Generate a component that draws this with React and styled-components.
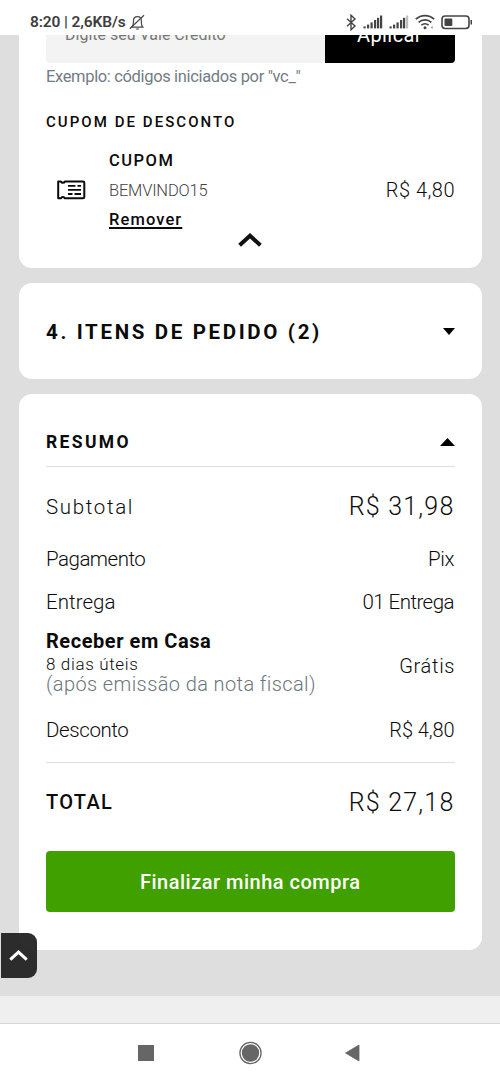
import React from "react";
import styled, { createGlobalStyle } from "styled-components";

const Global = createGlobalStyle`
  * { box-sizing: border-box; }
  body { margin: 0; background: #fff; font-family: Roboto, "Liberation Sans", sans-serif; color: #0b0b0b; }
  svg { display: block; flex: none; }
`;

const Screen = styled.div`
  width: 500px;
  height: 1083px;
  display: flex;
  flex-direction: column;
  overflow: hidden;
  background: #fff;
`;

const StatusBar = styled.header`
  height: 35px;
  flex: none;
  display: flex;
  align-items: flex-end;
  justify-content: space-between;
  padding: 0 27px 3px 30px;
  color: #3d3d3d;
`;

const StatusGroup = styled.div`
  display: flex;
  align-items: center;
  height: 20px;
  gap: ${(p) => p.$gap}px;
`;

const Page = styled.main`
  height: 961px;
  flex: none;
  overflow: hidden;
  background: #dedede;
  padding: 0 18.5px 0 19px;
  display: flex;
  flex-direction: column;
  gap: 15px;
`;

const Card = styled.section`
  flex: none;
  height: ${(p) => p.$height}px;
  background: #fff;
  border-radius: ${(p) => (p.$open ? "0 0 13px 13px" : "13px")};
  padding: 0 27px;
  display: flex;
  flex-direction: column;
`;

const Text = styled.span`
  font-size: ${(p) => p.$size || 20}px;
  font-weight: ${(p) => p.$weight || 350};
  letter-spacing: ${(p) => p.$track || 0}px;
  margin-right: ${(p) => -(p.$track || 0)}px;
  line-height: ${(p) => p.$line || 20}px;
  color: ${(p) => p.$color || "inherit"};
  white-space: nowrap;
`;

const Amount = styled.span`
  font-size: 25px;
  font-weight: 350;
  letter-spacing: 1.2px;
  line-height: 30px;
  padding-top: 1px;
  white-space: nowrap;
`;

const VoucherField = styled.div`
  display: flex;
  flex: none;
  height: 58px;
  margin-top: -30px;
  border-radius: 4px;
  overflow: hidden;
`;

const VoucherInput = styled.div`
  flex: 1;
  display: flex;
  align-items: center;
  padding: 1px 0 0 19px;
  background: #f3f3f3;
`;

const ApplyButton = styled.button`
  width: 130px;
  border: 0;
  padding: 1px 0 0;
  background: #000;
  color: #fff;
  font: 400 20px/20px Roboto, sans-serif;
  letter-spacing: 0.4px;
`;

const Hint = styled.div`
  display: flex;
  margin-top: 4px;
`;

const SectionLabel = styled.h3`
  margin: 25px 0 0;
  display: flex;
`;

const Coupon = styled.div`
  display: flex;
  align-items: center;
  height: 90px;
  margin-top: 13px;
  padding-left: 11px;
`;

const CouponInfo = styled.div`
  flex: 1;
  display: flex;
  flex-direction: column;
  align-items: flex-start;
  gap: 9.5px;
  padding: 1px 0 0 23px;
`;

const RemoveLink = styled.a`
  font-size: 16.5px;
  font-weight: 500;
  letter-spacing: 1.1px;
  line-height: 20px;
  text-decoration: underline;
  text-decoration-thickness: 1.5px;
  text-underline-offset: 2px;
`;

const CollapseToggle = styled.div`
  display: flex;
  justify-content: center;
  margin-top: -2px;
`;

const Header = styled.div`
  display: flex;
  flex: none;
  align-items: center;
  justify-content: space-between;
  height: ${(p) => p.$height}px;
  padding-top: ${(p) => p.$top || 0}px;
`;

const Divider = styled.hr`
  flex: none;
  width: 100%;
  height: 1px;
  border: 0;
  margin: 0;
  background: #dfdfdf;
`;

const Row = styled.div`
  display: flex;
  flex: none;
  align-items: center;
  justify-content: space-between;
  height: ${(p) => p.$height}px;
`;

const Delivery = styled.div`
  display: flex;
  flex-direction: column;
  padding-bottom: 8px;
`;

const BuyButton = styled.button`
  flex: none;
  height: 61px;
  margin-top: 9px;
  border: 0;
  border-radius: 4px;
  padding: 2px 0 0;
  background: #40a000;
  color: #fff;
  font: 500 20px/20px Roboto, sans-serif;
  letter-spacing: 0.5px;
`;

const FooterStrip = styled.div`
  flex: none;
  height: 28px;
  background: #efefef;
  border-bottom: 1px solid #d6d6d6;
`;

const NavBar = styled.nav`
  flex: 1;
  display: flex;
  align-items: center;
  padding: 0 140px 2px 138px;
  justify-content: space-between;
`;

const ScrollTop = styled.button`
  position: fixed;
  left: 1px;
  top: 933px;
  width: 35.5px;
  height: 44.5px;
  border: 0;
  padding: 0;
  border-radius: 0 9px 9px 0;
  background: rgba(34, 34, 34, 0.95);
  display: flex;
  align-items: center;
  justify-content: center;
`;

const BellOff = () => (
  <svg width="16" height="17" viewBox="0 0 16 17" fill="none" stroke="#4a4a4a" strokeWidth="1.2">
    <path d="M2.6 13.2h11.2c-1-1-1.400-2-1.400-4.200V7.200c0-2.600-1.500-4.500-4-4.500s-4 1.900-4 4.500V9c0 2.200-.7 3.200-1.800 4.200z" />
    <path d="M6.800 15h3.200M.8 14.800L15 1.200" />
  </svg>
);

const Bluetooth = () => (
  <svg width="12" height="17" viewBox="0 0 12 17" fill="none" stroke="#444" strokeWidth="1.4">
    <path d="M2 4.800l8 7.300-4 3.700V1.200l4 3.700-8 7.300" />
  </svg>
);

const Signal = ({ weak }) => (
  <svg width="20" height="14" viewBox="0 0 20 14" fill="#444">
    <rect x="0.500" y="11.400" width="2.200" height="2" />
    <rect x="4" y="9.600" width="2.200" height="3.800" />
    <rect x="7.500" y="7.400" width="2.200" height="6" />
    <rect x="11" y="5" width="2.200" height="8.400" />
    <rect x="14" y="2.800" width="2.200" height="10.600" />
    <rect x="17" y="0.500" width="2.200" height="12.900" opacity={weak ? 0.35 : 1} />
  </svg>
);

const Wifi = () => (
  <svg width="20" height="16" viewBox="0 0 20 16" fill="none" stroke="#444" strokeWidth="1.700">
    <path d="M.8 5.200a13.500 13.500 0 0 1 18.400 0M3.600 8.300a9.400 9.400 0 0 1 12.800 0M6.400 11.200a5.300 5.300 0 0 1 7.200 0" />
    <circle cx="10" cy="13.700" r="1.500" fill="#444" stroke="none" />
    <path d="M16 13.200l1.500-1.400v3.200z" fill="#777" stroke="none" />
  </svg>
);

const Battery = () => (
  <svg width="32" height="15" viewBox="0 0 32 15">
    <rect x="1" y="1" width="27" height="12.500" rx="3.200" fill="none" stroke="#444" strokeWidth="1.600" />
    <rect x="3.500" y="3.400" width="7.800" height="7.700" rx="1" fill="#444" />
    <path d="M29.500 5h1.500v4.500h-1.500z" fill="#444" />
  </svg>
);

const Ticket = () => (
  <svg width="29" height="20" viewBox="0 0 29 20" fill="none" stroke="#0b0b0b" strokeWidth="2" strokeLinejoin="round">
    <path d="M1.200 1.500h2.700a2.200 2.200 0 0 0 4 0H26q1.300 0 1.300 1.300V17q0 1.300-1.300 1.300H7.900a2.200 2.200 0 0 0-4 0H1.200z" />
    <path d="M11 5.800h7.500M20.500 5.800h3.500M11 9.900h13M11 14h4.500M17.500 14h6.500" strokeWidth="1.800" />
  </svg>
);

const Chevron = ({ width, height, color, stroke }) => (
  <svg width={width} height={height} viewBox="0 0 24 14" fill="none" stroke={color} strokeWidth={stroke}>
    <path d="M1.600 12.300L12 2.700l10.400 9.600" />
  </svg>
);

const Caret = ({ up }) => (
  <svg width={up ? 15 : 12} height={up ? 8 : 7} viewBox="0 0 12 7" preserveAspectRatio="none">
    <path d={up ? "M0 7L6 0l6 7z" : "M0 0h12L6 7z"} fill="#000" />
  </svg>
);

export default function App() {
  return (
    <Screen>
      <Global />
      <StatusBar>
        <StatusGroup $gap={3}>
          <Text $size={15.5} $weight={600} $track={-0.12}>8:20 | 2,6KB/s</Text>
          <BellOff />
        </StatusGroup>
        <StatusGroup $gap={6}>
          <Bluetooth /><Signal /><Signal weak /><Wifi /><Battery />
        </StatusGroup>
      </StatusBar>

      <Page>
        <Card $height={233} $open>
          <VoucherField>
            <VoucherInput><Text $size={16} $weight={400} $color="#777">Digite seu Vale Crédito</Text></VoucherInput>
            <ApplyButton>Aplicar</ApplyButton>
          </VoucherField>
          <Hint><Text $size={16.5} $weight={400} $track={-0.35} $color="#727c85">Exemplo: códigos iniciados por "vc_"</Text></Hint>
          <SectionLabel><Text $size={15} $weight={500} $track={2.05}>CUPOM DE DESCONTO</Text></SectionLabel>
          <Coupon>
            <Ticket />
            <CouponInfo>
              <Text $size={16.5} $weight={500} $track={1.5}>CUPOM</Text>
              <Text $size={16.5} $track={-0.2} $color="#444">BEMVINDO15</Text>
              <RemoveLink>Remover</RemoveLink>
            </CouponInfo>
            <Text $track={0.5}>R$ 4,80</Text>
          </Coupon>
          <CollapseToggle><Chevron width={24} height={14} color="#111" stroke={4} /></CollapseToggle>
        </Card>

        <Card $height={95.5}>
          <Header $height={96} $top={1}>
            <Text $size={20.5} $weight={700} $track={2.65}>4. ITENS DE PEDIDO (2)</Text>
            <Caret />
          </Header>
        </Card>

        <Card $height={556.5}>
          <Header $height={72} $top={24}>
            <Text $size={17.5} $weight={700} $track={2.35}>RESUMO</Text>
            <Caret up />
          </Header>
          <Divider />
          <Row $height={80}>
            <Text $size={20.5} $track={1.65}>Subtotal</Text>
            <Amount>R$ 31,98</Amount>
          </Row>
          <Row $height={24}>
            <Text $size={20.5} $track={-0.5}>Pagamento</Text>
            <Text $size={20.5} $track={-0.3}>Pix</Text>
          </Row>
          <Row $height={63}>
            <Text $size={20.5} $track={0.05}>Entrega</Text>
            <Text $size={20.5} $track={-0.55}>01 Entrega</Text>
          </Row>
          <Row $height={64}>
            <Delivery>
              <Text $weight={700} $track={0.55} $line={25}>Receber em Casa</Text>
              <Text $size={17} $track={0.65} $line={20}>8 dias úteis</Text>
              <Text $track={0.4} $line={20} $color="#6c757d">(após emissão da nota fiscal)</Text>
            </Delivery>
            <Text $track={0.7}>Grátis</Text>
          </Row>
          <Row $height={64}>
            <Text $size={20.5} $track={-0.4}>Desconto</Text>
            <Text $track={-0.1}>R$ 4,80</Text>
          </Row>
          <Divider />
          <Row $height={79}>
            <Text $weight={500} $track={1.3}>TOTAL</Text>
            <Amount>R$ 27,18</Amount>
          </Row>
          <BuyButton>Finalizar minha compra</BuyButton>
        </Card>
      </Page>

      <FooterStrip />
      <NavBar>
        <svg width="16" height="16"><rect width="16" height="16" fill="#666" /></svg>
        <svg width="24" height="24" fill="#666">
          <circle cx="12.500" cy="12" r="10.600" fill="none" stroke="#666" strokeWidth="1.300" />
          <circle cx="12.500" cy="12" r="8.700" />
        </svg>
        <svg width="15" height="18" viewBox="0 0 15 18"><path d="M14 1v16L.5 9z" fill="#666" stroke="#666" strokeWidth="0.8" strokeLinejoin="round" /></svg>
      </NavBar>
      <ScrollTop><Chevron width={19} height={13} color="#fff" stroke={3.8} /></ScrollTop>
    </Screen>
  );
}
